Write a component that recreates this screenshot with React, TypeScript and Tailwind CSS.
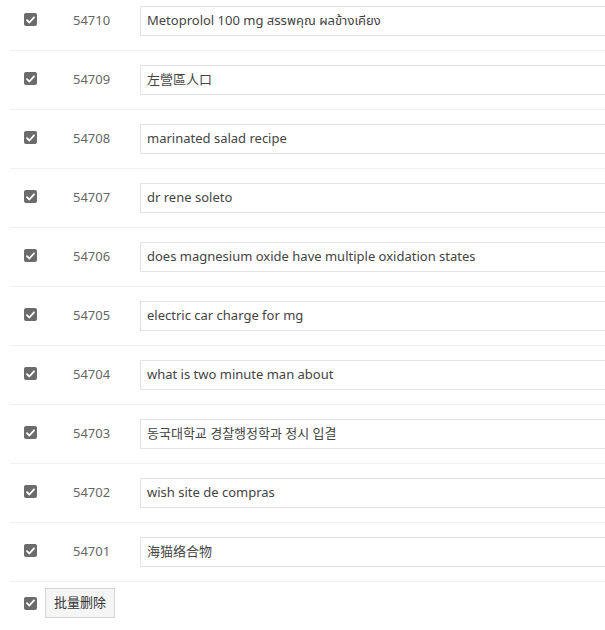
const rows = [
  { id: 54710, text: "Metoprolol 100 mg สรรพคุณ ผลข้างเคียง" },
  { id: 54709, text: "左營區人口" },
  { id: 54708, text: "marinated salad recipe" },
  { id: 54707, text: "dr rene soleto" },
  { id: 54706, text: "does magnesium oxide have multiple oxidation states" },
  { id: 54705, text: "electric car charge for mg" },
  { id: 54704, text: "what is two minute man about" },
  { id: 54703, text: "동국대학교 경찰행정학과 정시 입결" },
  { id: 54702, text: "wish site de compras" },
  { id: 54701, text: "海猫络合物" },
];

const font = {
  fontFamily:
    '"Segoe UI", "Noto Sans", "Noto Sans Thai", "Noto Sans CJK SC", "Noto Sans CJK KR", sans-serif',
};

function CheckBox({ className = "" }: { className?: string }) {
  return (
    <span
      className={`flex h-[13px] w-[13px] shrink-0 items-center justify-center rounded-[2px] bg-[#6b6b6b] ${className}`}
    >
      <svg width="9" height="8" viewBox="0 0 9 8" fill="none">
        <path d="M1 4.2 L3.4 6.5 L8 1.3" stroke="white" strokeWidth="1.8" strokeLinecap="round" strokeLinejoin="round" />
      </svg>
    </span>
  );
}

export default function App() {
  return (
    <div className="h-[630px] w-[605px] overflow-hidden bg-white" style={font}>
      <div className="-mt-[8px] pl-[10px]">
        {rows.map((row) => (
          <div key={row.id} className="flex items-center border-b border-[#f0f0f0] py-[14px] pl-[14px]">
            <CheckBox className="mb-[3px]" />
            <div className="ml-[36px] w-[67px] shrink-0 text-[13px] text-[#666]">{row.id}</div>
            <div className="flex h-[30px] w-[520px] shrink-0 items-center border border-[#e3e3e3] pl-[6px] text-[13px] text-[#444]">
              {row.text}
            </div>
          </div>
        ))}
        <div className="flex items-center gap-[8px] pl-[14px] pt-[6px]">
          <CheckBox />
          <button className="h-[30px] w-[70px] border border-[#d4d4d4] bg-[#f5f5f5] text-[13px] text-[#333]">
            批量删除
          </button>
        </div>
      </div>
    </div>
  );
}
